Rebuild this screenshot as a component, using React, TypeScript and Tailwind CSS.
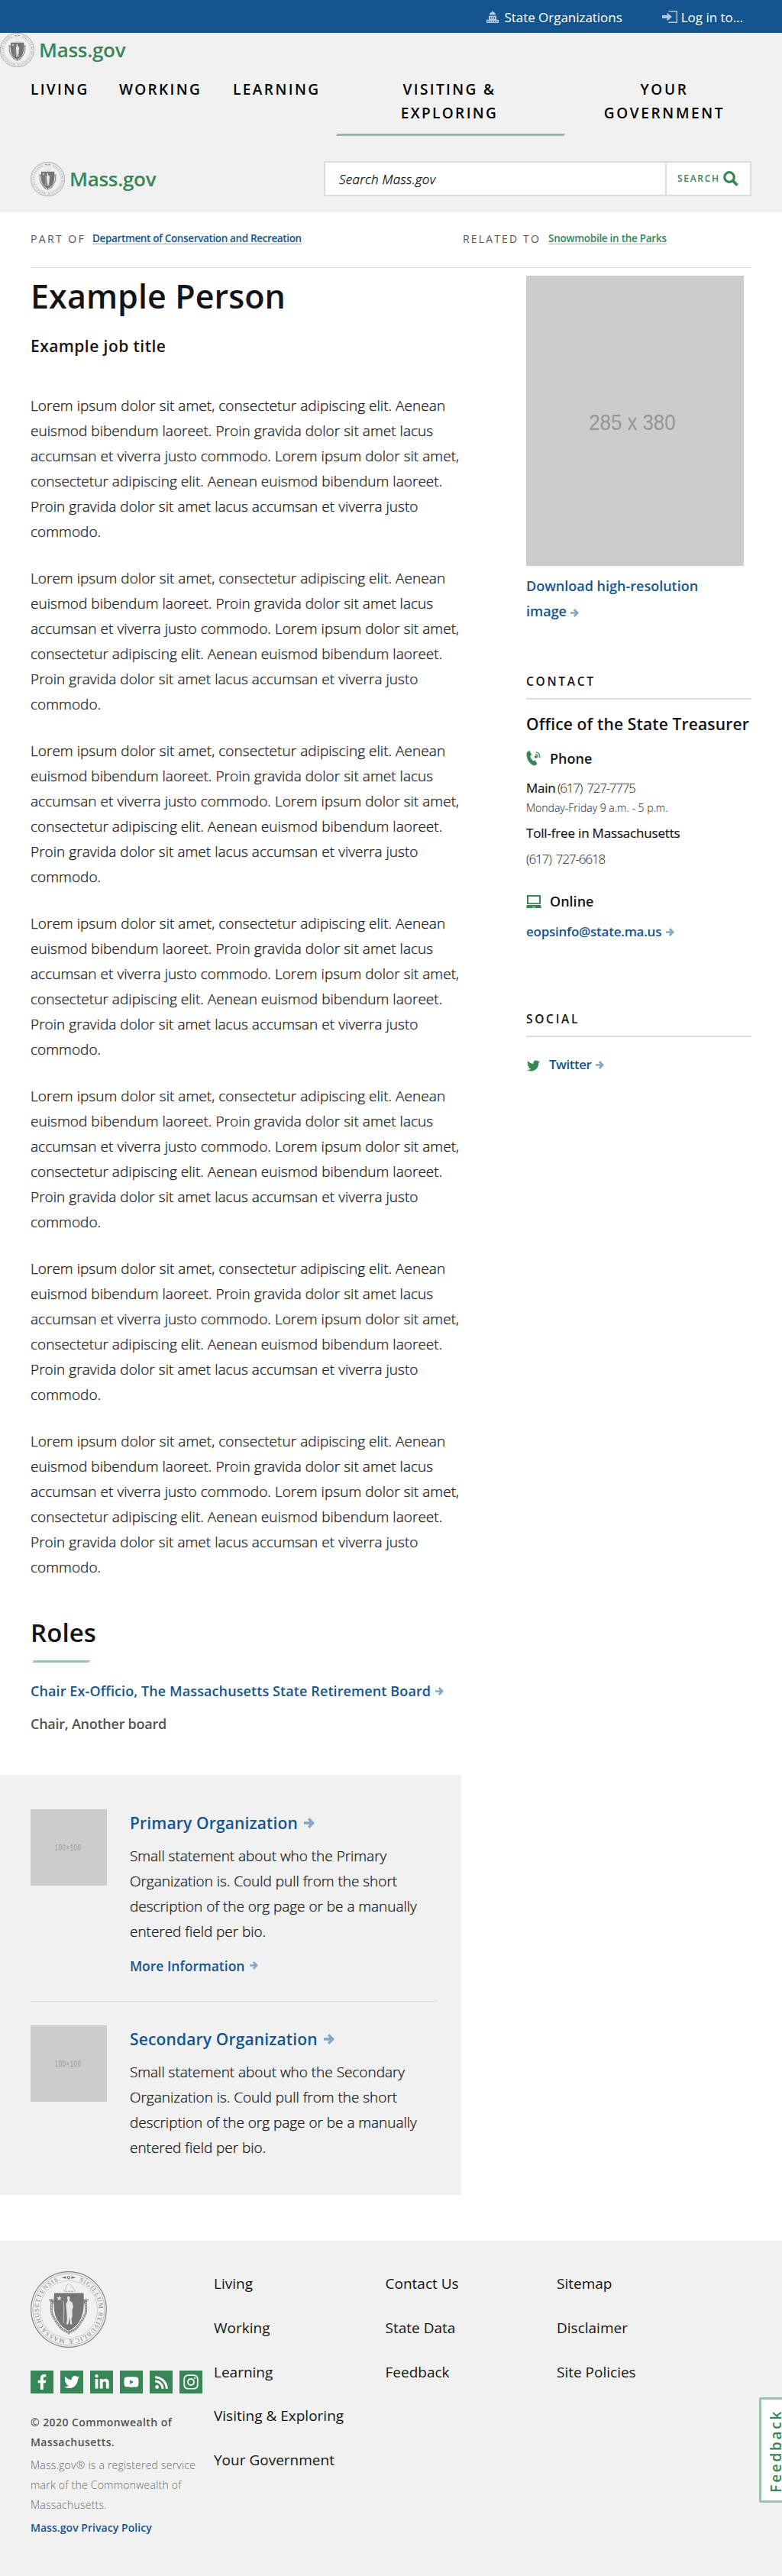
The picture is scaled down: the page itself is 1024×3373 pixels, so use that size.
import { FaFacebookF, FaInstagram, FaLinkedinIn, FaRss, FaTwitter, FaYoutube } from "react-icons/fa";

const LOREM = [
  "Lorem ipsum dolor sit amet, consectetur adipiscing elit. Aenean",
  "euismod bibendum laoreet. Proin gravida dolor sit amet lacus",
  "accumsan et viverra justo commodo. Lorem ipsum dolor sit amet,",
  "consectetur adipiscing elit. Aenean euismod bibendum laoreet.",
  "Proin gravida dolor sit amet lacus accumsan et viverra justo",
  "commodo.",
];

function Seal({ id, className }: { id: string; className: string }) {
  return (
    <svg viewBox="0 0 100 100" className={className} fill="none" stroke="#828282">
      <circle cx="50" cy="50" r="49.3" strokeWidth="1.2" />
      <circle cx="50" cy="50" r="47" strokeWidth="0.5" />
      <circle cx="50" cy="50" r="37.6" strokeWidth="0.9" strokeDasharray="1 0.8" opacity="0.65" />
      <path id={id} d="M50 10.6a39.4 39.4 0 1 1-.01 0" stroke="none" />
      <text fill="#808080" stroke="none" fontSize="8.2" fontFamily="Liberation Serif, serif" fontWeight="400">
        <textPath href={`#${id}`} startOffset="14" textLength="222">
          SIGILLUM REIPUBLICÆ MASSACHUSETTENSIS.
        </textPath>
      </text>
      <path d="M40.5 8.2l6-1.6v3.2zM59.5 8.2l-6-1.6v3.2z" fill="#757575" stroke="none" />
      <circle cx="50" cy="8.2" r="1.7" strokeWidth="1.1" />
      <path d="M43 26l3-2 1-5 3-3 3 2 4 6 2 2" stroke="#bdbdbd" strokeWidth="0.9" />
      <path d="M45 26.200h13" stroke="#999" strokeDasharray="3 1" strokeWidth="0.9" />
      <path
        d="M27 38c2 6-1.500 12 1.500 18.500S35 69 40 74.500s8.500 3.500 10 6c1.500-2.500 5-.5 10-6S68.500 63 71.500 56.500 71 44 73 38"
        strokeWidth="2.800"
      />
      <path
        d="M27 40c2 5-1.500 10 1.500 16.500S35 69 40 74.500s8.500 3.500 10 6c1.500-2.500 5-.5 10-6S68.500 63 71.500 56.500 71 46 73 40"
        stroke="#ddd"
        strokeWidth="1.100"
        strokeDasharray="2.200 1.200"
      />
      <path d="M24 37.500h5.500v5M76 37.500h-5.500v5" strokeWidth="1.600" />
      <path d="M31 28.500h38.500c.6 16 .5 24-3.500 33-3.500 8-9 13-16 16.500-7-3.500-12.500-8.500-16-16.500-4-9-3.600-17-3-33z" fill="#757575" stroke="none" />
      <g fill="#e8e8e8" stroke="none">
        <path d="M37.500 32l.9 2.300 2.500.1-2 1.500.7 2.400-2.100-1.400-2.100 1.400.7-2.400-2-1.500 2.500-.1z" />
        <path d="M48 33.500l2-1 1.500 2-.5 4 3.500 2 1.500 6-1.500 4 .3 8-1.300 4 1 7h-2.500l-1.200-10-1.300 10h-2.500l.8-7-.5-9-.5-5-.5-6 2.200-3z" />
      </g>
      <path d="M42.500 38c2 8 1 22 .5 30" stroke="#d8d8d8" strokeWidth="0.8" />
    </svg>
  );
}

function Logo({ id }: { id: string }) {
  return (
    <div className="flex h-[45px] items-start">
      <Seal id={id} className="h-[45px] w-[45px] shrink-0" />
      <span className="ml-[6px] mt-[2px] text-[26px] font-semibold leading-[40px] tracking-[-0.3px] text-[#388557]">
        Mass.gov
      </span>
    </div>
  );
}

function Arrow({ className = "h-[11px] w-[11px]" }: { className?: string }) {
  return (
    <svg viewBox="0 0 11 11" className={`inline-block ${className}`} fill="none" stroke="#86a7c7" strokeWidth="2.600">
      <path d="M0 5.500h8.500M4.800 1l4.400 4.500-4.400 4.500" />
    </svg>
  );
}

function SideTitle({ children }: { children: string }) {
  return (
    <h2 className="h-[36px] border-b-2 border-[#dcdcdc] text-[15.5px] font-semibold leading-[24px] tracking-[2.7px]">
      {children}
    </h2>
  );
}

function Organization({ kind, more }: { kind: string; more?: boolean }) {
  return (
    <div className="flex gap-[30px] whitespace-nowrap">
      <div className="flex h-[100px] w-[100px] shrink-0 items-center justify-center bg-[#ccc]">
        <span className="-ml-[2px] scale-x-75 font-['Liberation_Sans',sans-serif] text-[10px] tracking-[1px] text-[#969696]">100×100</span>
      </div>
      <div className="pt-[3px]">
        <h3 className="flex h-[30px] items-center gap-2 text-[21px] font-semibold leading-[30px] tracking-[0.15px] text-[#14558f]">
          {kind} Organization
          <Arrow className="h-[14px] w-[14px]" />
        </h3>
        <p className="mt-[12px] text-[19px] font-light leading-[33px] tracking-[-0.03px] [-webkit-text-stroke:0.25px]">
          Small statement about who the {kind}
          <br />
          Organization is. Could pull from the short
          <br />
          description of the org page or be a manually
          <br />
          entered field per bio.
        </p>
        {more && (
          <a className="mt-[13px] flex h-[29px] items-center gap-[7px] text-[17.5px] font-semibold leading-[30px] text-[#14558f]">
            More Information <Arrow />
          </a>
        )}
      </div>
    </div>
  );
}

function Header() {
  return (
    <header>
      <div className="flex h-[43px] justify-end bg-[#14558f] pr-[51px] pt-px text-[17px] leading-[43px] tracking-[-0.03px] text-white">
        <a className="flex items-center">
          <svg viewBox="0 0 16 16" className="mr-[7px] h-4 w-4" fill="#b3c8dc">
            <path d="M7.500 0h1v1.500a4.200 4.200 0 0 1 3.500 4H4a4.200 4.200 0 0 1 3.500-4z" />
            <path d="M3 6.700h10V12H3zM0 11.800h16V16H0z" />
            <path d="M5 8.500h1.200v2H5zM7.400 8.500h1.200v2H7.400zM9.800 8.500H11v2H9.800zM1.600 13.300h1.100v1.400H1.600zM4.500 13.300h1.100v1.400H4.500zM7.400 13.300h1.200v1.400H7.400zM10.300 13.300h1.100v1.400h-1.100zM13.200 13.300h1.100v1.400h-1.100z" fill="#14558f" />
          </svg>
          State Organizations
        </a>
        <a className="ml-[52px] flex items-center">
          <svg viewBox="0 0 20 16" className="mr-[5px] h-4 w-5" fill="#b3c8dc">
            <path d="M0 6h6.500V2.500L13 8l-6.500 5.500V10H0z" />
            <path d="M8.500 0H20v16H8.500v-1.400h10.100V1.400H8.500z" />
          </svg>
          Log in to...
        </a>
      </div>
      <div className="h-[235px] bg-[#f1f1f1]">
        <Logo id="seal-top" />
        <nav className="ml-[40px] mt-[14px] flex h-[76px] text-[19px] font-semibold leading-[31px] text-black">
          <a className="w-[116px] tracking-[2.35px]">LIVING</a>
          <a className="w-[149px] tracking-[2.35px]">WORKING</a>
          <a className="w-[136px] tracking-[2.45px]">LEARNING</a>
          <a className="relative w-[298px] pr-[3px] text-center tracking-[2.4px]">
            VISITING &amp;
            <br />
            EXPLORING
            <span className="absolute bottom-0 left-0 h-[3px] w-full -skew-x-[30deg] bg-[#94b9a2]" />
          </a>
          <a className="ml-[51px] w-[160px] text-center tracking-[2.65px]">
            YOUR
            <br />
            GOVERNMENT
          </a>
        </nav>
        <div className="ml-[40px] mt-[33px] flex items-start justify-between pr-[40px]">
          <div className="pt-px">
            <Logo id="seal-main" />
          </div>
          <div className="flex h-[46px] w-[560px] border-2 border-[#dcdcdc] bg-white">
            <div className="flex-1 border-r-2 border-[#dcdcdc] pl-[18px] text-[17px] font-light italic leading-[43px] tracking-[0.3px] text-black [-webkit-text-stroke:0.25px]">
              Search Mass.gov
            </div>
            <div className="flex w-[109px] items-center pl-[14px] text-[12px] font-semibold leading-[42px] tracking-[1.7px] text-[#388557]">
              SEARCH
              <svg viewBox="0 0 20 20" className="ml-[4px] h-5 w-5" fill="none" stroke="#388557">
                <circle cx="8" cy="8" r="6.300" strokeWidth="3.200" />
                <path d="M12.500 12.500l6 6" strokeWidth="3.800" />
              </svg>
            </div>
          </div>
        </div>
      </div>
    </header>
  );
}

function Breadcrumbs() {
  return (
    <div className="mx-[40px] flex h-[73px] border-b border-[#dcdcdc] pt-[24px] text-[14px] leading-[20px]">
      <div className="flex w-[566px] items-start">
        <span className="w-[81px] pt-px tracking-[2.4px] text-[#535353]">PART OF</span>
        <a className="h-[18px] border-b border-[#86aacb] text-[13.500px] font-semibold tracking-[-0.36px] text-[#14558f]">
          Department of Conservation and Recreation
        </a>
      </div>
      <span className="w-[112px] pt-px tracking-[2.15px] text-[#535353]">RELATED TO</span>
      <a className="h-[18px] border-b border-[#94c0a5] text-[13.500px] font-semibold tracking-[-0.27px] text-[#388557]">
        Snowmobile in the Parks
      </a>
    </div>
  );
}

function Sidebar() {
  return (
    <aside className="w-[295px] whitespace-nowrap pt-[10px]">
      <div className="flex h-[380px] w-[285px] items-center justify-center bg-[#ccc] pt-[3px]">
        <span className="-ml-[8px] scale-x-[.86] font-['Liberation_Sans',sans-serif] text-[30px] text-[#969696]">285 x 380</span>
      </div>
      <a className="mt-[10px] block h-[66px] text-[18px] font-semibold leading-[33px] text-[#14558f]">
        Download high-resolution
        <br />
        image <Arrow />
      </a>
      <div className="mt-[63px]">
        <SideTitle>CONTACT</SideTitle>
        <h3 className="mt-[17px] text-[21px] font-semibold leading-[30px] tracking-[0.15px]">Office of the State Treasurer</h3>
        <h4 className="mt-[15px] flex h-[30px] items-center text-[18px] font-semibold leading-[30px]">
          <svg viewBox="0 0 20 20" className="mr-[11px] h-5 w-5" fill="#388557">
            <path d="M1.500 1.500L4.500 0l2.700 5.200-2 1.800c.7 2.700 2.200 4.800 4 6.400l2.300-.8 2.900 4.400c-1.500 2.600-4.600 3-7 1.200C3.400 15.200 1 11 .6 6.200.5 4 .6 2.800 1.500 1.500z" />
            <g fill="none" stroke="#388557" strokeWidth="1.300">
              <path d="M12.800 1.800c3.400.6 5.300 3.500 5 7.400" />
              <path d="M12.200 4.600c2 .4 3.200 2 3 4.300" />
            </g>
            <path d="M11 7a1.800 1.800 0 1 1 .1 2.300z" />
          </svg>
          Phone
        </h4>
        <p className="mt-[9px] flex text-[17px] leading-[30px]">
          <span className="w-[41px] font-medium tracking-[-0.3px] [-webkit-text-stroke:0.2px]">Main</span>
          <span className="font-light tracking-[-1.25px] [word-spacing:3px]">(617) 727-7775</span>
        </p>
        <p className="mt-px text-[14px] font-light leading-[20px]">Monday-Friday 9 a.m. - 5 p.m.</p>
        <p className="mt-[8px] text-[17px] font-medium leading-[30px] tracking-[-0.18px] [-webkit-text-stroke:0.2px]">
          Toll-free in Massachusetts
        </p>
        <p className="mt-[4px] text-[17px] font-light leading-[30px] tracking-[-1.15px] [word-spacing:3px]">(617) 727-6618</p>
        <h4 className="mt-[25px] flex h-[30px] items-center text-[18px] font-semibold leading-[30px]">
          <svg viewBox="0 0 20 17" className="mr-[11px] h-[17px] w-5" fill="#388557">
            <path d="M1 0h18v12H1zM3 2v8.300h14V2z" fillRule="evenodd" />
            <path d="M1 13h18l1 4H0z" />
            <path d="M8 15.800h4" stroke="#fff" strokeWidth="0.8" />
          </svg>
          Online
        </h4>
        <a className="mt-[10px] flex h-[30px] items-center gap-[6px] text-[17px] font-semibold leading-[30px] tracking-[-0.25px] text-[#14558f]">
          eopsinfo@state.ma.us <Arrow />
        </a>
      </div>
      <div className="mt-[87px]">
        <SideTitle>SOCIAL</SideTitle>
        <a className="mt-[21px] flex h-[30px] items-center text-[17px] font-semibold leading-[30px] tracking-[-0.5px] text-[#14558f]">
          <FaTwitter className="mr-[12px] ml-px mt-[2px] h-[17px] w-[17px] text-[#388557]" />
          Twitter <Arrow className="ml-[6px] h-[11px] w-[11px]" />
        </a>
      </div>
    </aside>
  );
}

const SOCIAL = [
  { Icon: FaFacebookF, c: "h-[20px] w-[20px]" },
  { Icon: FaTwitter, c: "h-[20px] w-[20px]" },
  { Icon: FaLinkedinIn, c: "h-[21px] w-[21px]" },
  { Icon: FaYoutube, c: "h-[20px] w-[20px]" },
  { Icon: FaRss, c: "h-[19px] w-[19px]" },
  { Icon: FaInstagram, c: "h-[22px] w-[22px]" },
];

const LINKS = [
  ["Living", "Working", "Learning", "Visiting & Exploring", "Your Government"],
  ["Contact Us", "State Data", "Feedback"],
  ["Sitemap", "Disclaimer", "Site Policies"],
];

function Footer() {
  return (
    <footer className="mt-[60px] flex h-[439px] whitespace-nowrap bg-[#f1f1f1] pl-[40px] pt-[40px]">
      <div className="w-[240px]">
        <Seal id="seal-footer" className="h-[100px] w-[100px]" />
        <div className="mt-[30px] flex gap-[9px]">
          {SOCIAL.map(({ Icon, c }, i) => (
            <a key={i} className="flex h-[30px] w-[30px] items-center justify-center bg-[#388557] text-white">
              <Icon className={c} />
            </a>
          ))}
        </div>
        <p className="mt-[25px] text-[14px] font-semibold leading-[26px] tracking-[0.43px] text-[#535353]">
          © 2020 Commonwealth of
          <br />
          Massachusetts.
        </p>
        <p className="mt-[4px] text-[14px] font-light leading-[26px] tracking-[0.23px] text-[#6b6b6b]">
          Mass.gov® is a registered service
          <br />
          mark of the Commonwealth of
          <br />
          Massachusetts.
        </p>
        <a className="mt-[4px] block text-[14px] font-semibold leading-[26px] tracking-[0.05px] text-[#14558f]">
          Mass.gov Privacy Policy
        </a>
      </div>
      {LINKS.map((column) => (
        <div key={column[0]} className="w-[224.5px] pt-px">
          {column.map((link) => (
            <a key={link} className="mb-[27.75px] block text-[19px] leading-[30px] text-[#141414]">
              {link}
            </a>
          ))}
        </div>
      ))}
    </footer>
  );
}

export default function App() {
  return (
    <div className="relative h-[3373px] w-[1024px] overflow-hidden bg-white font-['Open_Sans',sans-serif] text-[#141414]">
      <Header />
      <Breadcrumbs />
      <main className="flex gap-[85px]">
        <div className="w-[604px]">
          <div className="whitespace-nowrap pl-[40px]">
            <h1 className="mt-[9px] text-[43px] font-semibold leading-[56px] tracking-[0.1px]">Example Person</h1>
            <p className="mt-[22px] text-[21px] font-semibold leading-[30px] tracking-[0.45px]">Example job title</p>
            <div className="mt-[47px] flex flex-col gap-[28px]">
              {[0, 1, 2, 3, 4, 5, 6].map((n) => (
                <p key={n} className="text-[19px] font-light leading-[33px] tracking-[0.04px] [-webkit-text-stroke:0.25px]">
                  {LOREM.map((line) => (
                    <span key={line} className="block">
                      {line}
                    </span>
                  ))}
                </p>
              ))}
            </div>
            <h2 className="mt-[47px] text-[33px] font-semibold leading-[44px] tracking-[0.1px]">Roles</h2>
            <div className="ml-[3px] mt-[14px] h-[3px] w-[74px] -skew-x-[30deg] bg-[#9bc4aa]" />
            <a className="mt-[22px] flex h-[30px] items-center gap-[6px] text-[18px] font-semibold leading-[30px] tracking-[0.1px] text-[#14558f]">
              Chair Ex-Officio, The Massachusetts State Retirement Board <Arrow />
            </a>
            <p className="mt-[13px] text-[18px] font-semibold leading-[30px] tracking-[-0.25px] text-[#535353]">Chair, Another board</p>
          </div>
          <section className="mt-[52px] h-[550px] bg-[#f1f1f1] pl-[40px] pr-[30px] pt-[45px]">
            <Organization kind="Primary" more />
            <hr className="mb-[31px] mt-[32px] border-t border-[#dcdcdc]" />
            <Organization kind="Secondary" />
          </section>
        </div>
        <Sidebar />
      </main>
      <Footer />
      <button className="absolute right-0 top-[3139px] flex h-[138px] w-[30px] items-center rounded-l-[3px] border-[3px] border-r-0 border-[#9bc4aa] bg-white">
        <span className="ml-[11px] mt-[2px] rotate-180 text-[19px] font-semibold leading-[16px] tracking-[2.7px] text-[#388557] [writing-mode:vertical-rl]">
          Feedback
        </span>
      </button>
    </div>
  );
}
